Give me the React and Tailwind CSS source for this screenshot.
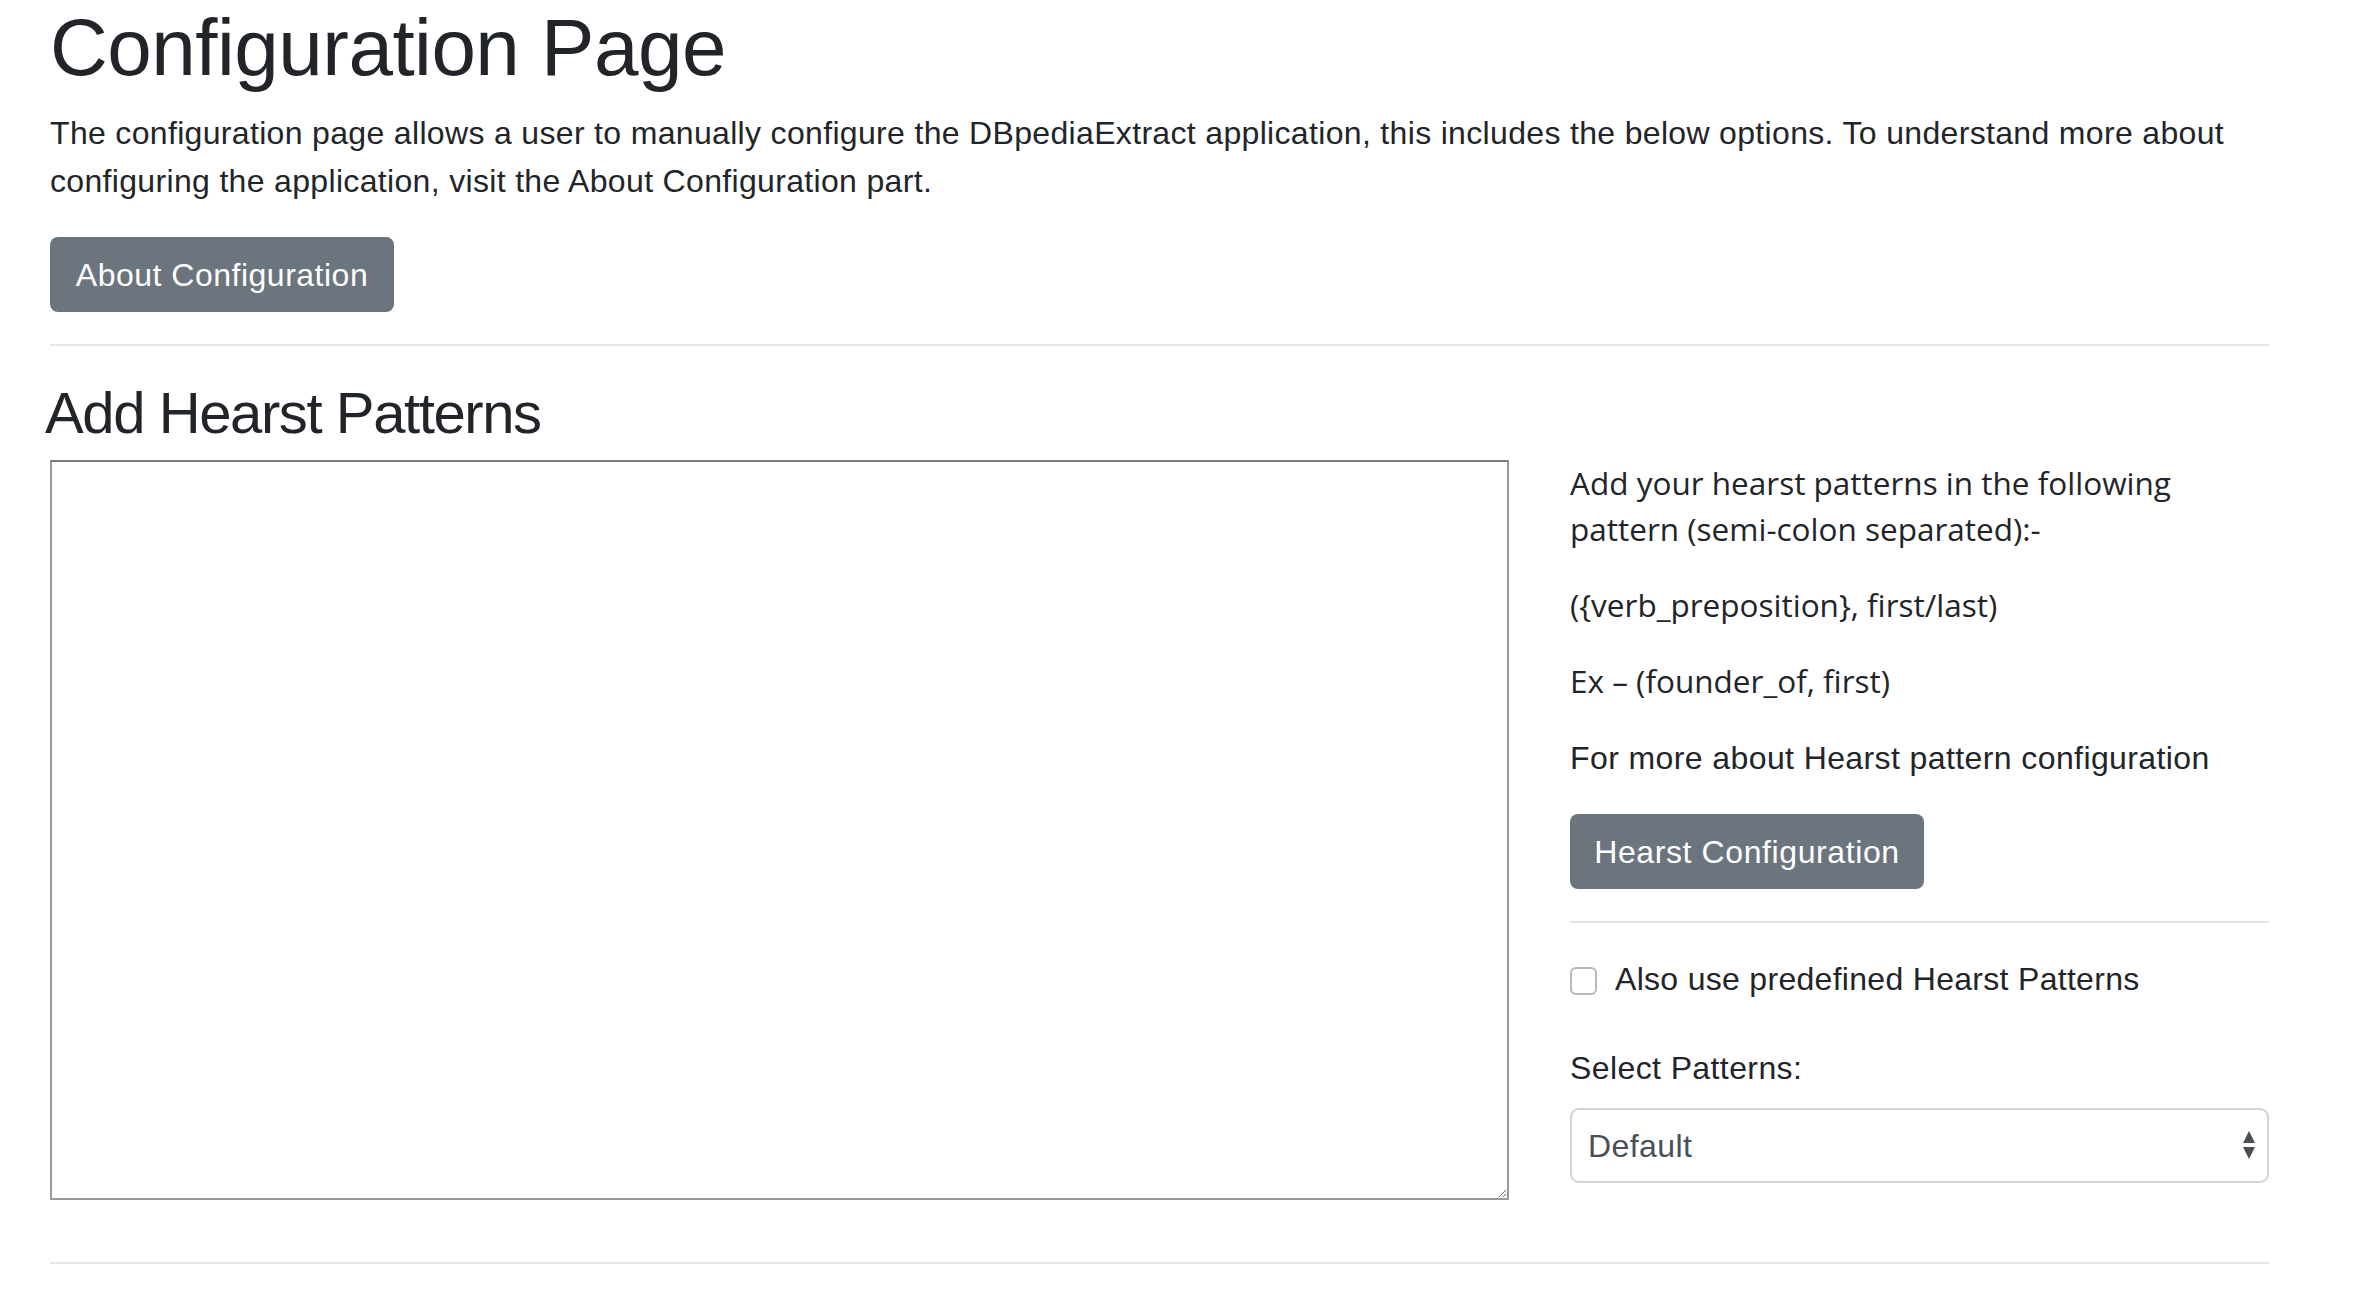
export default function App() {
  return (
    <div className="min-h-screen w-[2364px] bg-white text-[#212529] font-['Liberation_Sans',Arial,sans-serif] tracking-[0.4px]">
      <div className="ml-[50px] w-[2219px]">
        <h1 className="m-0 text-[80px] leading-[96px] font-normal tracking-[-0.5px]">Configuration Page</h1>
        <p className="mt-[13px] mb-[32px] text-[32px] leading-[48px] tracking-[0.33px]">
          The configuration page allows a user to manually configure the DBpediaExtract application, this includes the below options. To understand more about configuring the application, visit the About Configuration part.
        </p>
        <button className="flex h-[75px] w-[344px] items-center justify-center rounded-[8px] bg-[#6c757d] text-[32px] text-white tracking-[0.5px]">
          About Configuration
        </button>
        <div className="mt-[32px] h-[2px] w-full bg-[#e6e6e6]" />
        <h2 className="-ml-[5px] mt-[28px] mb-[9px] text-[58px] leading-[77px] font-normal tracking-[-1.4px]">Add Hearst Patterns</h2>
        <div className="flex gap-[61px]">
          <textarea className="block h-[740px] w-[1459px] resize border-2 border-[#9a9a9a] border-t-[#7a7a7a] bg-white outline-none" />
          <div className="w-[699px]">
            <div className="font-['Open_Sans','Noto_Sans',sans-serif] text-[31.5px] leading-[46px] tracking-normal">
              <p className="mb-[30px]">Add your hearst patterns in the following pattern (semi-colon separated):-</p>
              <p className="mb-[30px]">({'{'}verb_preposition{'}'}, first/last)</p>
              <p className="mb-[30px]">Ex – (founder_of, first)</p>
            </div>
            <p className="mb-[32px] text-[32px] leading-[48px]">For more about Hearst pattern configuration</p>
            <button className="flex h-[75px] w-[354px] items-center justify-center rounded-[8px] bg-[#6c757d] text-[32px] text-white tracking-[0.6px]">
              Hearst Configuration
            </button>
            <div className="my-[32px] h-[2px] w-full bg-[#e6e6e6]" />
            <label className="flex h-[48px] items-center gap-[18px] text-[32px] leading-[48px] tracking-[0.3px]">
              <span className="mt-[4px] block h-[28px] w-[27px] shrink-0 rounded-[6px] border-2 border-[#b8b8b8] bg-white" />
              <span>Also use predefined Hearst Patterns</span>
            </label>
            <div className="mt-[41px] mb-[16px] text-[32px] leading-[48px]">Select Patterns:</div>
            <div className="flex h-[75px] w-full items-center justify-between rounded-[9px] border-2 border-[#ced4da] bg-white pl-[16px] pr-[12px] text-[32px] text-[#495057]">
              <span>Default</span>
              <svg width="12" height="30" viewBox="0 0 12 30" className="block">
                <polygon points="6,0 12,12 0,12" fill="#4a4f55" />
                <polygon points="0,16 12,16 6,28" fill="#4a4f55" />
              </svg>
            </div>
          </div>
        </div>
        <div className="mt-[62px] h-[2px] w-full bg-[#e6e6e6]" />
      </div>
    </div>
  );
}
